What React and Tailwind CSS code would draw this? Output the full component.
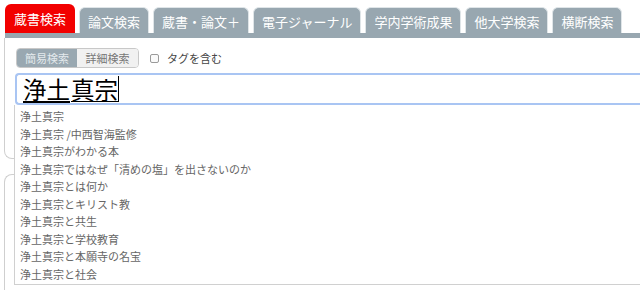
const tabs = ["蔵書検索", "論文検索", "蔵書・論文＋", "電子ジャーナル", "学内学術成果", "他大学検索", "横断検索"];

const suggestions = [
  "浄土真宗",
  "浄土真宗 /中西智海監修",
  "浄土真宗がわかる本",
  "浄土真宗ではなぜ「清めの塩」を出さないのか",
  "浄土真宗とは何か",
  "浄土真宗とキリスト教",
  "浄土真宗と共生",
  "浄土真宗と学校教育",
  "浄土真宗と本願寺の名宝",
  "浄土真宗と社会",
];

export default function App() {
  return (
    <div
      className="w-[640px] h-[290px] overflow-hidden bg-white pl-[4px]"
      style={{ fontFamily: '"Noto Sans CJK JP", "Noto Sans", sans-serif' }}
    >
      {/* tab row */}
      <div className="flex items-end gap-[4px] h-[33px] pl-[1px]">
        {tabs.map((t, i) => (
          <div
            key={t}
            className={`text-[13px] leading-[20px] text-white rounded-t-[6px] whitespace-nowrap ${
              i === 0
                ? "h-[29px] px-[9px] pt-[5px] bg-[#f20000]"
                : "h-[26px] px-[8px] pt-[4px] bg-[#98a7b0] border border-b-0 border-[#dfe5e8]"
            }`}
          >
            {t}
          </div>
        ))}
      </div>
      <div className="h-[5px] bg-[#98a7b0] ml-[1px]" />

      {/* search panel */}
      <div className="relative">
        <div className="h-[121px] border-l border-b border-[#cfcfcf] rounded-bl-[8px] pl-[11px] pt-[10px]">
          <div className="flex items-center">
            <div className="flex h-[20px] text-[11px] leading-[18px] rounded-[4px] overflow-hidden border border-[#c8c8c8]">
              <div className="w-[60px] text-center bg-[#99a8b1] text-[#e4eaed]">簡易検索</div>
              <div className="w-[61px] text-center bg-[#f1f1f1] text-[#777]">詳細検索</div>
            </div>
            <div className="ml-[11px] w-[9px] h-[9px] border border-[#9a9a9a] rounded-[2px] bg-[#fafafa]" />
            <div className="ml-[8px] text-[11px] text-[#444]">タグを含む</div>
          </div>
          <div className="relative mt-[5px] -ml-[1px] h-[32px] w-[640px] border-2 border-r-0 border-[#a9c5f3] rounded-l-[4px] bg-white pl-[6px] flex items-center">
            <span className="text-[23.5px] leading-[26px] text-black underline decoration-2 underline-offset-[2px]">浄土</span>
            <span className="text-[23.5px] leading-[26px] text-black underline decoration-1 underline-offset-[2px] ml-[1px]">真宗</span>
            <span className="w-px h-[26px] bg-black" />
          </div>
        </div>

        {/* suggestion dropdown */}
        <div className="absolute left-[10px] top-[67px] w-[640px] h-[180px] bg-white border-l border-b border-[#d0d0d0] pt-[3px] pl-[5px]">
          {suggestions.map((s) => (
            <div key={s} className="h-[17.5px] text-[11px] leading-[17.5px] text-[#666] whitespace-nowrap">
              {s}
            </div>
          ))}
        </div>
      </div>

      {/* next panel behind */}
      <div className="mt-[15px] h-[200px] border-l border-t border-[#cfcfcf] rounded-tl-[8px]" />
    </div>
  );
}
